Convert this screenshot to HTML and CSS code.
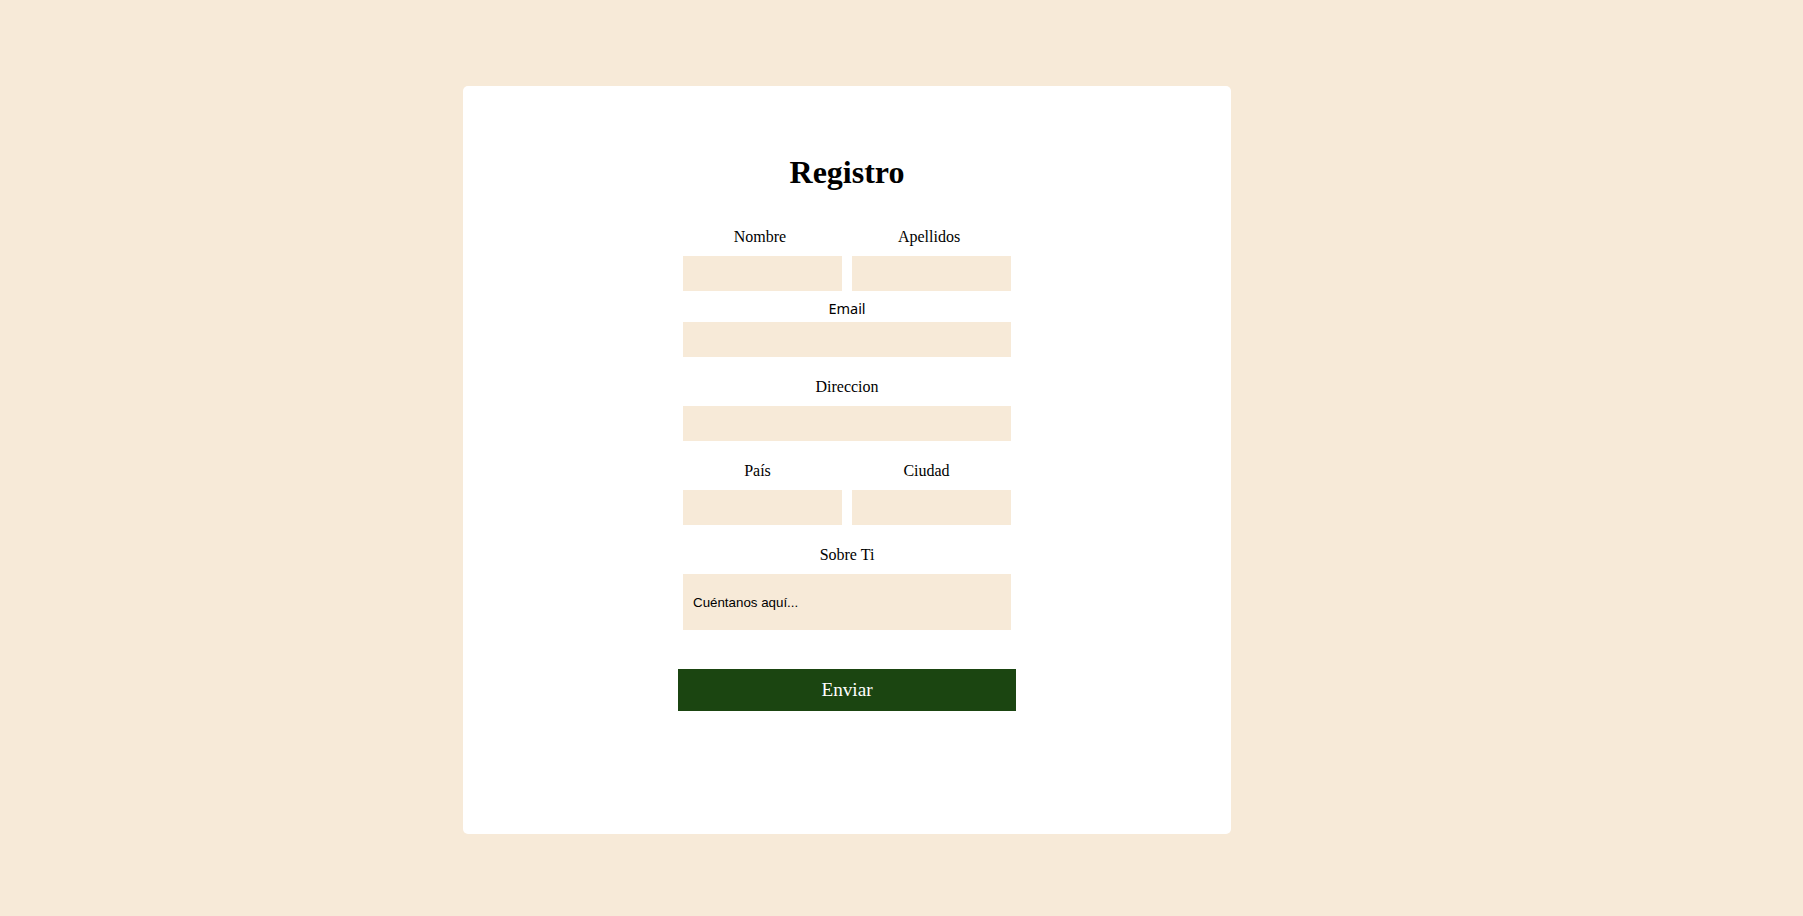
FILE: index.html
```html
<!DOCTYPE html>
<html lang="es">
<head>
<meta charset="utf-8">
<title>Registro</title>
<link rel="stylesheet" href="styles.css">
</head>
<body>
<main class="page">
  <section class="card">
    <h1 class="title">Registro</h1>
    <form class="form">
      <div class="row row-first">
        <div class="field">
          <label class="label">Nombre</label>
          <input class="input" type="text">
        </div>
        <div class="field">
          <label class="label">Apellidos</label>
          <input class="input" type="text">
        </div>
      </div>
      <div class="field field-email">
        <label class="label label-sans">Email</label>
        <input class="input" type="email">
      </div>
      <div class="field field-gap">
        <label class="label">Direccion</label>
        <input class="input" type="text">
      </div>
      <div class="row row-second field-gap">
        <div class="field">
          <label class="label">País</label>
          <input class="input" type="text">
        </div>
        <div class="field">
          <label class="label">Ciudad</label>
          <input class="input" type="text">
        </div>
      </div>
      <div class="field field-gap">
        <label class="label">Sobre Ti</label>
        <textarea class="textarea">Cuéntanos aquí...</textarea>
      </div>
      <button class="button" type="button">Enviar</button>
    </form>
  </section>
</main>
</body>
</html>
```
FILE: styles.css
```css
* { box-sizing: border-box; }
html, body {
  margin: 0;
  background: #f7ead8;
}
body {
  font-family: "Liberation Serif", "Times New Roman", serif;
  color: #000;
}
.page {
  height: 916px;
  padding: 86px 0 0 463px;
}
.card {
  width: 768px;
  height: 748px;
  background: #fff;
  border-radius: 5px;
  padding-top: 68px;
  display: flex;
  flex-direction: column;
  align-items: center;
}
.title {
  margin: 0;
  font-size: 32px;
  line-height: 37px;
  font-weight: bold;
}
.form {
  width: 328px;
  margin-top: 37px;
  display: flex;
  flex-direction: column;
  align-items: stretch;
}
.row {
  display: flex;
  gap: 10px;
}
.row .field { flex: 1; }
.row-first .label { padding-right: 5px; }
.row-second .label { padding-right: 10px; }
.field {
  display: flex;
  flex-direction: column;
}
.label {
  display: block;
  text-align: center;
  font-size: 16px;
  line-height: 18px;
  margin-bottom: 10px;
}
.label-sans {
  font-family: "Noto Sans", "Liberation Sans", sans-serif;
  font-size: 14.5px;
  line-height: 17px;
  margin-bottom: 5px;
}
.field-email { margin-top: 9px; }
.field-gap { margin-top: 21px; }
.input {
  display: block;
  width: 100%;
  height: 35px;
  border: none;
  outline: none;
  background: #f7ead8;
  padding: 0 10px;
}
.textarea {
  display: block;
  width: 100%;
  height: 56px;
  border: none;
  outline: none;
  resize: none;
  background: #f7ead8;
  font-family: "Liberation Sans", Arial, sans-serif;
  font-size: 13.33px;
  line-height: 15px;
  color: #000;
  padding: 21px 10px 0;
  overflow: hidden;
}
.button {
  display: block;
  width: 338px;
  height: 42px;
  margin: 39px 0 0 -5px;
  border: none;
  outline: none;
  background: #1b4511;
  color: #fff;
  font-family: "Liberation Serif", "Times New Roman", serif;
  font-size: 19.2px;
  cursor: pointer;
}
```
